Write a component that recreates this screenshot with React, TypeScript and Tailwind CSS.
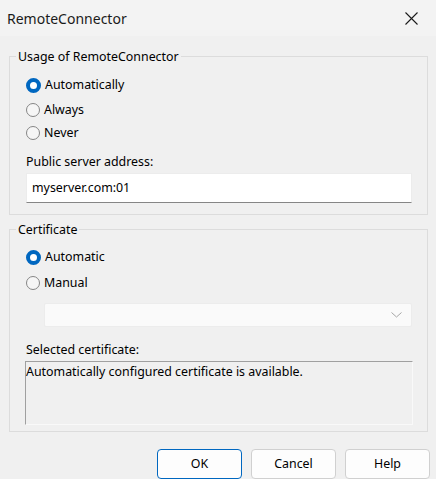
function Radio({ checked, label, className }: { checked?: boolean; label: string; className?: string }) {
  return (
    <div className={"flex h-[22px] items-center gap-[4px] " + (className ?? "")}>
      {checked ? (
        <span className="box-border h-[15px] w-[15px] rounded-full border-[4px] border-[#0067c0] bg-white" />
      ) : (
        <span className="box-border h-[14px] w-[14px] rounded-full border border-[#858585] bg-[#f6f6f6]" />
      )}
      <span>{label}</span>
    </div>
  );
}

function GroupBox({ title, className, children }: { title: string; className?: string; children: React.ReactNode }) {
  return (
    <div className={"ml-[9px] mr-[8px] flex flex-col border border-[#dcdcdc] pl-[16px] pr-[15px] " + (className ?? "")}>
      <div className="-ml-[10px] -mt-[9px] h-[18px] w-fit bg-[#f0f0f0] px-[2px] leading-[18px]">{title}</div>
      {children}
    </div>
  );
}

export default function App() {
  return (
    <div
      className="flex h-[479px] w-[436px] flex-col overflow-hidden bg-[#f0f0f0] text-[12.4px] text-black"
      style={{ fontFamily: '"Noto Sans", "Open Sans", sans-serif' }}
    >
      <div className="flex h-[36px] shrink-0 items-center justify-between bg-[#f3f3f3] pl-[7px] pr-[18px]">
        <span className="text-[14px] text-[#1a1a1a]">RemoteConnector</span>
        <svg width="13" height="13" viewBox="0 0 13 13" className="text-[#1a1a1a]">
          <path d="M0.5 0.5 L12.5 12.5 M12.5 0.5 L0.5 12.5" stroke="currentColor" strokeWidth="1.1" />
        </svg>
      </div>

      <GroupBox title="Usage of RemoteConnector" className="mt-[20px] pb-[11px]">
        <Radio checked label="Automatically" className="mt-[8px]" />
        <Radio label="Always" className="mt-[3px]" />
        <Radio label="Never" className="mt-[1px]" />
        <div className="mt-[8px] h-[20px] leading-[20px]">Public server address:</div>
        <div className="mt-[1px] flex h-[30px] items-center border border-[#ececec] border-b-[#868686] bg-white pl-[5px]">
          myserver.com:01
        </div>
      </GroupBox>

      <GroupBox title="Certificate" className="mt-[14px] pb-[6px]">
        <Radio checked label="Automatic" className="mt-[7px]" />
        <Radio label="Manual" className="mt-[4px]" />
        <div className="ml-[18px] mt-[9px] flex h-[24px] items-center justify-end rounded-[2px] border border-[#ececec] bg-[#fafafa] pr-[9px]">
          <svg width="11" height="6" viewBox="0 0 11 6">
            <path d="M0.5 0.5 L5.5 5 L10.5 0.5" fill="none" stroke="#a6a6a6" strokeWidth="1" />
          </svg>
        </div>
        <div className="mt-[13px] h-[20px] leading-[20px]">Selected certificate:</div>
        <div className="-mx-[1px] mt-[1px] h-[64px] border border-[#a0a0a0] border-b-[#f9f9f9] border-r-[#f9f9f9] bg-[#f0f0f0] leading-[20px]">
          Automatically configured certificate is available.
        </div>
      </GroupBox>

      <div className="mt-[17px] flex justify-end gap-[9px] pr-[6px]">
        <button className="h-[30px] w-[85px] rounded-[4px] border border-[#0067c0] bg-[#fdfdfd]">OK</button>
        <button className="h-[30px] w-[85px] rounded-[4px] border border-[#d0d0d0] bg-[#fdfdfd]">Cancel</button>
        <button className="h-[30px] w-[85px] rounded-[4px] border border-[#d0d0d0] bg-[#fdfdfd]">Help</button>
      </div>
    </div>
  );
}
